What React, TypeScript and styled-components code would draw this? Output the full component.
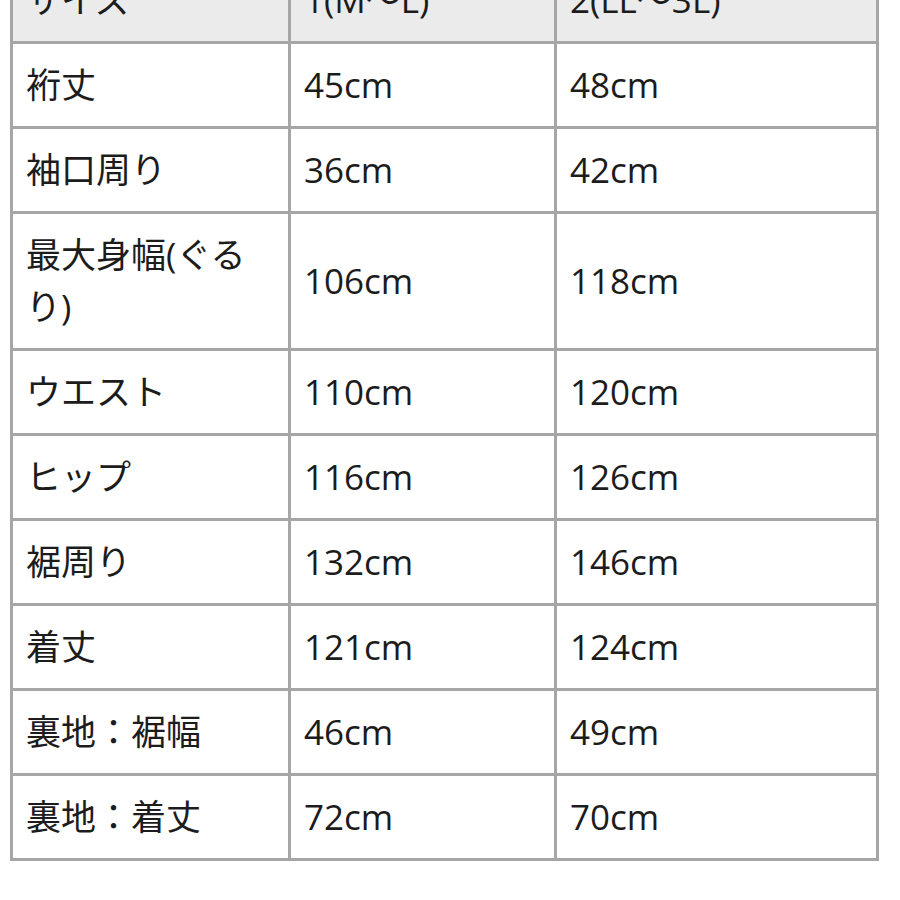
import React from 'react';
import styled, { createGlobalStyle } from 'styled-components';

const GlobalStyle = createGlobalStyle`
  html, body {
    margin: 0;
    padding: 0;
    background: #fff;
  }
  body {
    font-family: "Open Sans", "Noto Sans CJK JP", sans-serif;
    color: #1c1c1c;
  }
`;

const Page = styled.div`
  width: 900px;
  height: 900px;
  overflow: hidden;
  padding-left: 10px;
  box-sizing: border-box;
`;

const SizeTable = styled.table`
  margin-top: -44px;
  width: 866px;
  table-layout: fixed;
  border-collapse: collapse;
  border: 3px solid #a6a6a6;
  font-size: 35px;
  line-height: 52px;
`;

const Cell = styled.td<{ head?: boolean }>`
  border: 3px solid #a6a6a6;
  padding: 15px 12px 15px 13px;
  text-align: left;
  vertical-align: middle;
  font-weight: 400;
  background: ${({ head }) => (head ? '#ebebeb' : '#fff')};
`;

const rows: [string, string, string][] = [
  ['裄丈', '45cm', '48cm'],
  ['袖口周り', '36cm', '42cm'],
  ['最大身幅(ぐるり)', '106cm', '118cm'],
  ['ウエスト', '110cm', '120cm'],
  ['ヒップ', '116cm', '126cm'],
  ['裾周り', '132cm', '146cm'],
  ['着丈', '121cm', '124cm'],
  ['裏地：裾幅', '46cm', '49cm'],
  ['裏地：着丈', '72cm', '70cm'],
];

export default function App() {
  return (
    <>
      <GlobalStyle />
      <Page>
        <SizeTable>
          <colgroup>
            <col style={{ width: 278 }} />
            <col style={{ width: 266 }} />
            <col style={{ width: 322 }} />
          </colgroup>
          <thead>
            <tr>
              <Cell as="th" head>サイズ</Cell>
              <Cell as="th" head>1(M〜L)</Cell>
              <Cell as="th" head>2(LL〜3L)</Cell>
            </tr>
          </thead>
          <tbody>
            {rows.map(([name, a, b]) => (
              <tr key={name}>
                <Cell>{name}</Cell>
                <Cell>{a}</Cell>
                <Cell>{b}</Cell>
              </tr>
            ))}
          </tbody>
        </SizeTable>
      </Page>
    </>
  );
}
